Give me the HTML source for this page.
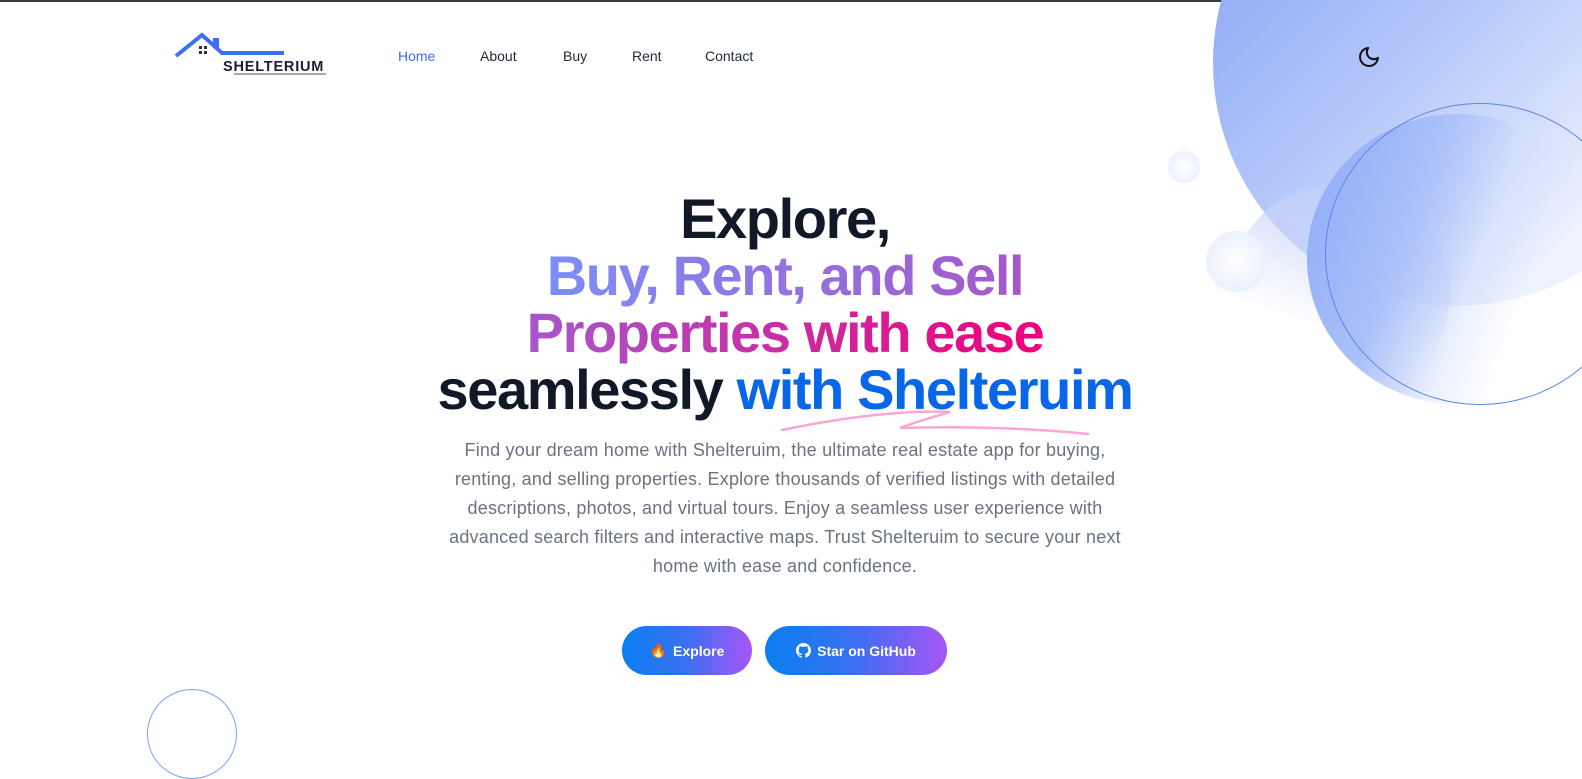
<!DOCTYPE html>
<html><head><meta charset="utf-8"><style>
*{margin:0;padding:0;box-sizing:border-box}
body{width:1582px;height:749px;overflow:hidden;background:#fff;font-family:"Liberation Sans",sans-serif;position:relative;border-top:2px solid #3a3a3a}
.abs{position:absolute}
nav a{position:absolute;top:46px;font-size:14px;color:#1f2937;text-decoration:none}
h1{position:absolute;left:0;width:1570px;top:188px;text-align:center;font-size:56px;line-height:57px;font-weight:bold;letter-spacing:-1.4px;color:#111827}
.g{background:linear-gradient(90deg,#7c8ef8,#a855c8 50%,#f0007a);-webkit-background-clip:text;color:transparent}
p.d{position:absolute;left:385px;width:800px;top:434px;text-align:center;font-size:18px;line-height:29px;color:#6b7280;white-space:nowrap;letter-spacing:0.2px}
.btn{position:absolute;top:624px;height:49px;border-radius:25px;background:linear-gradient(90deg,#0a7ff0,#3b6ff2 50%,#a855f7);color:#fff;font-weight:bold;font-size:14px;display:flex;align-items:center;justify-content:center;gap:6px}
</style></head><body>
<div class="abs" style="left:1213px;top:-182px;width:486px;height:486px;border-radius:50%;background:linear-gradient(135deg,#7f9ef5 0%,#b4c7fa 45%,#eef2fe 80%)"></div>
<div class="abs" style="left:1230px;top:180px;width:220px;height:220px;border-radius:50%;background:linear-gradient(20deg,rgba(255,255,255,0) 35%,rgba(200,212,250,.7) 70%,rgba(255,255,255,0) 90%)"></div>
<div class="abs" style="left:1307px;top:112px;width:300px;height:290px;border-radius:50%;background:linear-gradient(110deg,#8eaaf6 0%,#aac0f9 35%,rgba(210,222,252,.5) 55%,rgba(255,255,255,0) 70%)"></div>
<div class="abs" style="left:1325px;top:101px;width:310px;height:302px;border-radius:50%;border:1px solid #5b84f0"></div>
<div class="abs" style="left:1168px;top:149px;width:32px;height:32px;border-radius:50%;background:radial-gradient(circle,#fff,#e6ebfc)"></div>
<div class="abs" style="left:1206px;top:229px;width:61px;height:61px;border-radius:50%;background:radial-gradient(circle,#fff,#e4eafc)"></div>
<div class="abs" style="left:147px;top:687px;width:90px;height:90px;border-radius:50%;border:1px solid #7fa0f3"></div>
<svg class="abs" style="left:170px;top:26px" width="170" height="50" viewBox="0 0 170 50">
<path d="M6 28 L32 7 L52 25 L114 25" fill="none" stroke="#3b6ff5" stroke-width="4"/>
<rect x="43" y="10" width="6" height="10" fill="#3b6ff5"/>
<rect x="29" y="18" width="3" height="3" fill="#333"/><rect x="34" y="18" width="3" height="3" fill="#333"/>
<rect x="29" y="23" width="3" height="3" fill="#333"/><rect x="34" y="23" width="3" height="3" fill="#333"/>
<text x="53" y="43" font-family="Liberation Sans" font-weight="bold" font-size="14.5" fill="#1f1a3a" letter-spacing="0.8">SHELTERIUM</text>
<line x1="64" y1="46" x2="156" y2="46" stroke="#555" stroke-width="1"/>
</svg>
<nav>
<a style="left:398px;color:#3b6ff5">Home</a>
<a style="left:480px">About</a>
<a style="left:563px">Buy</a>
<a style="left:632px">Rent</a>
<a style="left:705px">Contact</a>
</nav>
<svg class="abs" style="left:1357px;top:43px" width="24" height="24" viewBox="0 0 24 24"><path d="M21 12.8A9 9 0 1 1 11.2 3a7 7 0 0 0 9.8 9.8z" fill="none" stroke="#111" stroke-width="2" stroke-linejoin="round"/></svg>
<h1>Explore,<br><span class="g">Buy, Rent, and Sell<br>Properties with ease</span><br>seamlessly <span style="color:#0866e8">with Shelteruim</span></h1>
<svg class="abs" style="left:780px;top:400px" width="320" height="36" viewBox="0 0 320 36"><path d="M2 28 C60 16 120 8 170 10 C150 16 135 20 120 26 C180 24 250 26 308 32" fill="none" stroke="#f9a8d4" stroke-width="2.5" stroke-linecap="round"/></svg>
<p class="d">Find your dream home with Shelteruim, the ultimate real estate app for buying,<br>renting, and selling properties. Explore thousands of verified listings with detailed<br>descriptions, photos, and virtual tours. Enjoy a seamless user experience with<br>advanced search filters and interactive maps. Trust Shelteruim to secure your next<br>home with ease and confidence.</p>
<div class="btn" style="left:622px;width:130px"><span style="font-size:14px">🔥</span>Explore</div>
<div class="btn" style="left:765px;width:182px"><svg width="15" height="15" viewBox="0 0 16 16"><path fill="#fff" d="M8 0C3.6 0 0 3.6 0 8c0 3.5 2.3 6.5 5.5 7.6.4.1.5-.2.5-.4v-1.4c-2.2.5-2.7-1-2.7-1-.4-.9-.9-1.2-.9-1.2-.7-.5.1-.5.1-.5.8.1 1.2.8 1.2.8.7 1.2 1.9.9 2.3.7.1-.5.3-.9.5-1.1-1.8-.2-3.6-.9-3.6-4 0-.9.3-1.6.8-2.1-.1-.2-.4-1 .1-2.1 0 0 .7-.2 2.2.8.6-.2 1.3-.3 2-.3s1.4.1 2 .3c1.5-1 2.2-.8 2.2-.8.4 1.1.2 1.9.1 2.1.5.6.8 1.3.8 2.1 0 3.1-1.9 3.7-3.6 3.9.3.3.5.8.5 1.5v2.2c0 .2.1.5.6.4C13.7 14.5 16 11.5 16 8c0-4.4-3.6-8-8-8z"/></svg>Star on GitHub</div>
</body></html>
